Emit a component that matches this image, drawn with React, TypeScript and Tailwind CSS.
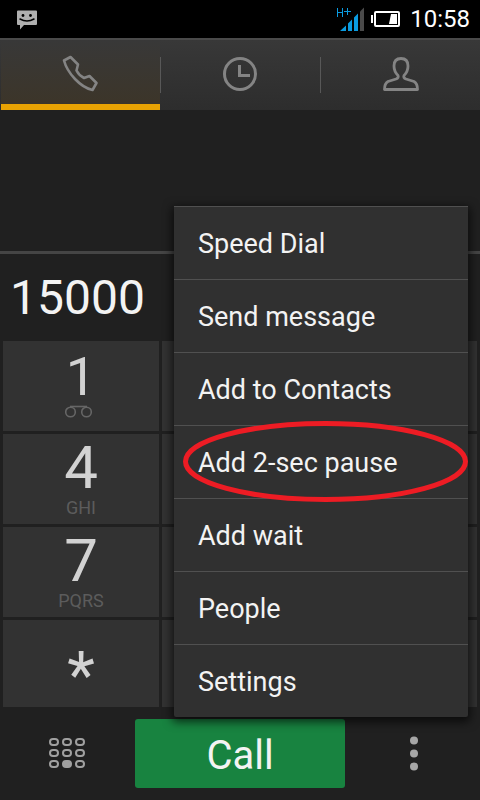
import { clsx } from 'clsx'

type Key = { digit: string; letters?: string; voicemail?: boolean }

const KEYS: (Key | null)[] = [
    { digit: '1', voicemail: true }, null, null,
    { digit: '4', letters: 'GHI' }, null, null,
    { digit: '7', letters: 'PQRS' }, null, null,
    { digit: '*' }, null, null,
]

const MENU = [
    'Speed Dial',
    'Send message',
    'Add to Contacts',
    'Add 2-sec pause',
    'Add wait',
    'People',
    'Settings',
]

const HIGHLIGHTED = 'Add 2-sec pause'

function StatusBar() {
    return (
        <header className="flex h-[38px] items-center justify-between bg-black pl-4 pr-[10px] text-white">
            <svg className="mt-[2px]" width="22" height="20" viewBox="0 0 22 20">
                <path d="M2 .5h18q1 0 1 1v12.500q0 1-1 1H8l-4 4.500v-4.500H2q-1 0-1-1V1.500q0-1 1-1z" fill="#b0b0b0" />
                <circle cx="7" cy="5.500" r="1.400" />
                <circle cx="14.500" cy="5.500" r="1.400" />
                <path d="M4 9q7 4 14 0" fill="none" stroke="#000" strokeWidth="1.500" strokeLinecap="round" />
            </svg>
            <div className="flex items-center gap-[7px]">
                <svg width="29" height="26" viewBox="0 0 29 26" fill="#0a9be0">
                    <path d="M2.500 2v9M7.500 2v9M2.500 6.500h5M9 5.500h7M12.500 2v7" stroke="#0a9be0" strokeWidth="1" fill="none" />
                    <path d="M5 25l6-5.500V25zM13 17.500l4-4V25h-4zM19 11.500l4-4V25h-4z" />
                    <path d="M25 5.500l4-4V25h-4z" fill="#4a4a4a" />
                </svg>
                <svg width="29" height="18" viewBox="0 0 29 18">
                    <path d="M0 5h2v8H0z" fill="#fff" />
                    <rect x="4" y="2" width="24" height="14" rx="1" fill="none" stroke="#fff" strokeWidth="2" />
                    <path d="M20 4h6v10h-8z" fill="#fff" />
                </svg>
                <span className="ml-[3px] text-2xl leading-none">10:58</span>
            </div>
        </header>
    )
}

function Tabs() {
    return (
        <nav className="grid h-[72px] grid-cols-3 border-t-2 border-[#4a4a4a] bg-linear-to-b from-[#383838] to-[#2d2d2d]">
            <button aria-current="page" className="ml-px flex items-center justify-center border-b-6 border-[#e9a303] bg-linear-to-b from-[#383838] to-[#3c3529]">
                <svg width="40" height="40" viewBox="0 0 40 40" fill="none" stroke="#848484" strokeWidth="2.600" strokeLinejoin="round">
                    <path d="M3 8.500L9.500 5l7.500 7.500-1.500 6q2.500 5 7.500 7.500l5.500-2 7 7-4 7q-9-2-17.500-11T3 8.500z" />
                </svg>
            </button>
            <button className="flex items-center">
                <span className="h-9 w-px bg-[#585858]" />
                <svg className="mx-auto" width="38" height="38" viewBox="0 0 38 38" fill="none" stroke="#848484" strokeWidth="3">
                    <circle cx="18" cy="18" r="15.500" />
                    <path d="M17.500 9v10.500H28" />
                </svg>
            </button>
            <button className="flex items-center">
                <span className="h-9 w-px bg-[#585858]" />
                <svg className="mx-auto" width="38" height="38" viewBox="0 0 38 38" fill="none" stroke="#848484" strokeWidth="2.800" strokeLinejoin="round">
                    <path d="M2.500 33.500h33q0-6-3.500-8l-8-2.500q-3-1.200-2-3.500 4-4 4-9.500Q26 2.500 19 2.500T12 10q0 5.500 4 9.500 1 2.300-2 3.500l-8 2.500q-3.500 2-3.500 8z" />
                </svg>
            </button>
        </nav>
    )
}

function KeyButton({ digit, letters, voicemail }: Key) {
    return (
        <button className="flex flex-col items-center bg-[#323232] text-[#d2d2d2]">
            <span
                className={clsx(
                    voicemail && 'text-[54px] leading-[72px]',
                    letters && 'text-[60px] leading-[68px]',
                    !letters && !voicemail && 'pt-5 text-[64px] leading-[72px]'
                )}
            >
                {digit}
            </span>
            {letters && <span className="text-lg leading-3 text-[#5c5c5c]">{letters}</span>}
            {voicemail && (
                <svg className="-mt-2" width="32" height="14" viewBox="0 0 32 14" fill="none" stroke="#666" strokeWidth="1.600">
                    <circle cx="5.500" cy="7" r="4.800" />
                    <circle cx="21.500" cy="7" r="4.800" />
                    <path d="M5 1.500h17" />
                </svg>
            )}
        </button>
    )
}

function Keypad() {
    return (
        <div className="grid grid-cols-3 grid-rows-[90px_90px_90px_87px] gap-[3px] px-[3px]">
            {KEYS.map((key, i) => (key ? <KeyButton key={i} {...key} /> : <div key={i} className="bg-[#323232]" />))}
        </div>
    )
}

function OptionsMenu() {
    return (
        <ul className="absolute right-3 bottom-[83px] w-[294px] rounded-b-[2px] bg-[#303030] shadow-[0_3px_10px_2px_rgba(0,0,0,0.65)]">
            {MENU.map((item) => (
                <li key={item} className="relative border-t border-[#505050]">
                    <button className="block h-[72px] w-full px-6 pt-[2px] text-left text-[27px] text-[#f3f3f3]">{item}</button>
                    {item === HIGHLIGHTED && (
                        <svg className="pointer-events-none absolute top-[-5px] left-[9px] z-10" width="285" height="81" viewBox="0 0 285 81" fill="none">
                            <ellipse cx="142.500" cy="40.500" rx="140" ry="38" stroke="#ed1c24" strokeWidth="5" />
                        </svg>
                    )}
                </li>
            ))}
        </ul>
    )
}

function ActionBar() {
    return (
        <footer className="grid grid-cols-[1fr_210px_1fr] items-center py-3">
            <button className="flex justify-center">
                <svg width="40" height="32" viewBox="0 0 40 32" fill="none" stroke="#a0a0a0" strokeWidth="2">
                    {[4, 15, 26].map((y) =>
                        [6, 19, 32].map((x) => (
                            <rect key={`${x}-${y}`} x={x - 4} y={y - 3} width="8" height="6" rx="3" fill={x === 19 && y === 26 ? '#a0a0a0' : 'none'} />
                        ))
                    )}
                </svg>
            </button>
            <button className="h-[69px] rounded-[3px] bg-[#188340] pt-1 text-[40px] text-[#f3f3f3]">Call</button>
            <button className="flex justify-center">
                <svg width="10" height="36" viewBox="0 0 10 36" fill="#a6a6a6">
                    <circle cx="6" cy="4.500" r="4" />
                    <circle cx="6" cy="17.500" r="4" />
                    <circle cx="6" cy="30.500" r="4" />
                </svg>
            </button>
        </footer>
    )
}

export default function App() {
    return (
        <div className="relative flex min-h-screen flex-col bg-[#202020] font-['Roboto',sans-serif]">
            <StatusBar />
            <Tabs />
            <main className="flex flex-1 flex-col">
                <div className="flex-1 border-b-3 border-[#454545]" />
                <output className="block h-[87px] px-[10px] text-5xl leading-[87px] text-[#f3f3f3]">15000</output>
                <Keypad />
            </main>
            <ActionBar />
            <OptionsMenu />
        </div>
    )
}
